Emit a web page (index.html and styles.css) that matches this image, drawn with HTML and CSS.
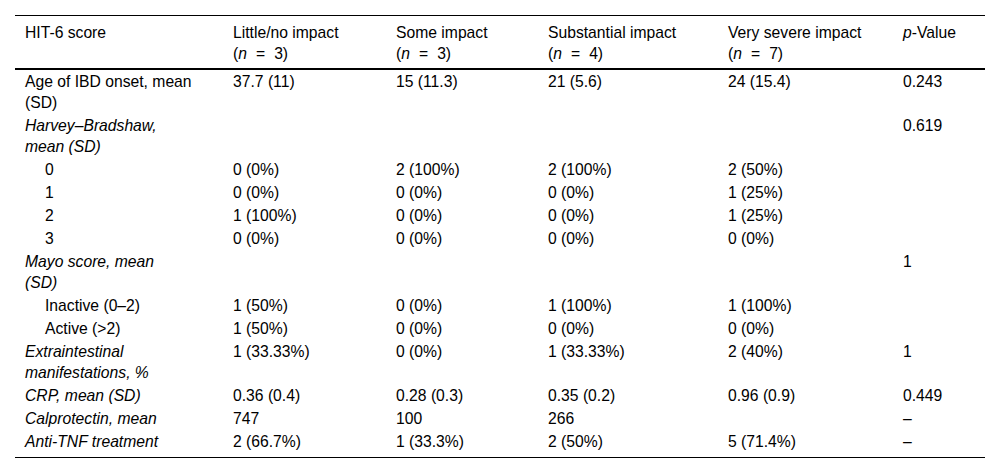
FILE: index.html
```html
<!DOCTYPE html>
<html lang="en">
<head>
<meta charset="utf-8">
<title>HIT-6 score table</title>
<link rel="stylesheet" href="styles.css">
</head>
<body>
<table class="data">
  <colgroup>
    <col class="c1"><col class="c2"><col class="c3"><col class="c4"><col class="c5"><col class="c6">
  </colgroup>
  <thead>
    <tr>
      <th>HIT-6 score</th>
      <th>Little/no impact<br>(<i>n</i><span class="eq">=</span>3)</th>
      <th>Some impact<br>(<i>n</i><span class="eq">=</span>3)</th>
      <th>Substantial impact<br>(<i>n</i><span class="eq">=</span>4)</th>
      <th>Very severe impact<br>(<i>n</i><span class="eq">=</span>7)</th>
      <th><i>p</i>-Value</th>
    </tr>
  </thead>
  <tbody>
    <tr><td>Age of IBD onset, mean<br>(SD)</td><td>37.7 (11)</td><td>15 (11.3)</td><td>21 (5.6)</td><td>24 (15.4)</td><td>0.243</td></tr>
    <tr><td class="it">Harvey–Bradshaw,<br>mean (SD)</td><td></td><td></td><td></td><td></td><td>0.619</td></tr>
    <tr><td class="sub">0</td><td>0 (0%)</td><td>2 (100%)</td><td>2 (100%)</td><td>2 (50%)</td><td></td></tr>
    <tr><td class="sub">1</td><td>0 (0%)</td><td>0 (0%)</td><td>0 (0%)</td><td>1 (25%)</td><td></td></tr>
    <tr><td class="sub">2</td><td>1 (100%)</td><td>0 (0%)</td><td>0 (0%)</td><td>1 (25%)</td><td></td></tr>
    <tr><td class="sub">3</td><td>0 (0%)</td><td>0 (0%)</td><td>0 (0%)</td><td>0 (0%)</td><td></td></tr>
    <tr><td class="it">Mayo score, mean<br>(SD)</td><td></td><td></td><td></td><td></td><td>1</td></tr>
    <tr><td class="sub">Inactive (0–2)</td><td>1 (50%)</td><td>0 (0%)</td><td>1 (100%)</td><td>1 (100%)</td><td></td></tr>
    <tr><td class="sub">Active (&gt;2)</td><td>1 (50%)</td><td>0 (0%)</td><td>0 (0%)</td><td>0 (0%)</td><td></td></tr>
    <tr><td class="it">Extraintestinal<br>manifestations, %</td><td>1 (33.33%)</td><td>0 (0%)</td><td>1 (33.33%)</td><td>2 (40%)</td><td>1</td></tr>
    <tr><td class="it">CRP, mean (SD)</td><td>0.36 (0.4)</td><td>0.28 (0.3)</td><td>0.35 (0.2)</td><td>0.96 (0.9)</td><td>0.449</td></tr>
    <tr><td class="it">Calprotectin, mean</td><td>747</td><td>100</td><td>266</td><td></td><td>–</td></tr>
    <tr class="last"><td class="it">Anti-TNF treatment</td><td>2 (66.7%)</td><td>1 (33.3%)</td><td>2 (50%)</td><td>5 (71.4%)</td><td>–</td></tr>
  </tbody>
</table>
</body>
</html>
```

FILE: styles.css
```css
html, body {
  margin: 0;
  padding: 0;
  background: #fff;
}

body {
  padding: 15px 15px 0 15px;
  font-family: "Liberation Sans", Arial, sans-serif;
  font-size: 15.7px;
  line-height: 21px;
  color: #000;
}

.data {
  width: 970px;
  table-layout: fixed;
  border-collapse: collapse;
  border-top: 1px solid #000;
  border-bottom: 1px solid #000;
}

.c1 { width: 208px; }
.c2 { width: 163px; }
.c3 { width: 152px; }
.c4 { width: 180px; }
.c5 { width: 175px; }
.c6 { width: 92px; }

.data th,
.data td {
  text-align: left;
  vertical-align: top;
  font-weight: normal;
  white-space: nowrap;
  padding: 1px 0 1px 10px;
}

.data thead th {
  padding-top: 6px;
  padding-bottom: 4px;
  border-bottom: 2px solid #000;
}

.data .it {
  font-style: italic;
}

.data .sub {
  padding-left: 30px;
}

.data .last td {
  padding-bottom: 5px;
}

.eq {
  margin: 0 9px;
}
```
